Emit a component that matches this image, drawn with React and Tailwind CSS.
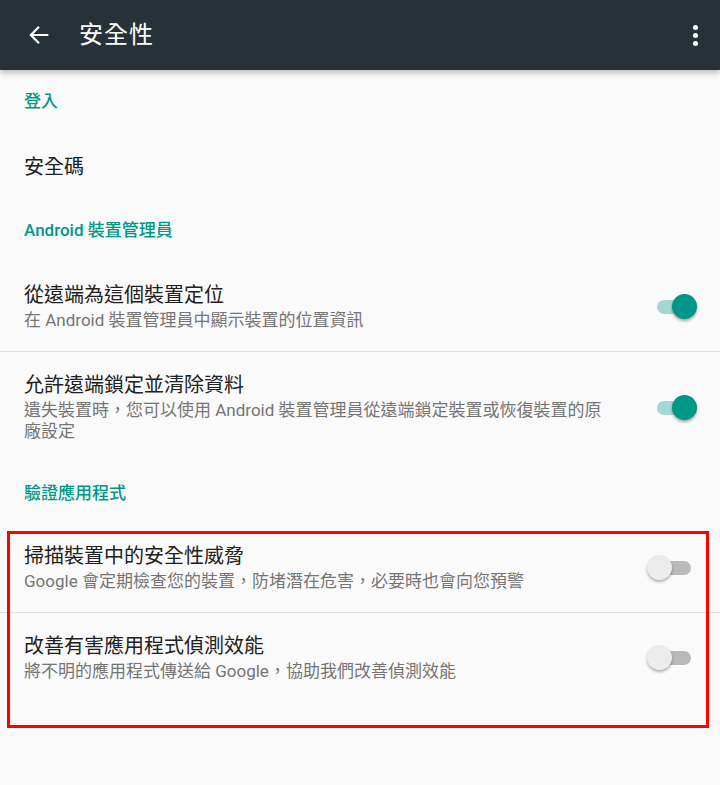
const font = { fontFamily: '"Roboto", "Noto Sans CJK TC", sans-serif' };

function Toggle({ on }) {
  return (
    <div className="relative h-[26px] w-[52px] shrink-0">
      <div
        className={
          on
            ? 'absolute left-[10px] top-[6px] h-[14px] w-[34px] rounded-full bg-[#a6d8d3]'
            : 'absolute left-[10px] top-[6px] h-[14px] w-[34px] rounded-full bg-[#b9b9b9]'
        }
      />
      <div
        className={
          on
            ? 'absolute left-[25px] top-0 h-[25px] w-[25px] rounded-full bg-[#009688] shadow-[0_2px_3px_rgba(0,0,0,0.35)]'
            : 'absolute left-0 top-0 h-[25px] w-[25px] rounded-full bg-[#ececec] shadow-[0_2px_3px_rgba(0,0,0,0.3)]'
        }
      />
    </div>
  );
}

function Category({ children }) {
  return (
    <div className="flex h-[64px] items-center px-6 text-[17px] font-medium text-[#009688]">
      {children}
    </div>
  );
}

function SwitchRow({ title, summary, on, divider, pt = 'pt-5' }) {
  return (
    <div className={divider ? 'border-b border-[#e0e0e0]' : ''}>
      <div className={`flex items-center gap-[40px] pb-5 pl-6 pr-[21px] ${pt}`}>
        <div className="flex-1">
          <div className="text-[20px] leading-[24px] text-[#212121]">{title}</div>
          <div className="mt-[3px] text-[17px] leading-[21px] text-[#757575]">{summary}</div>
        </div>
        <Toggle on={on} />
      </div>
    </div>
  );
}

export default function App() {
  return (
    <div className="relative min-h-[785px] w-[720px] overflow-hidden bg-[#fafafa]" style={font}>
      <header className="relative z-10 flex h-[70px] items-center bg-[#263238] pl-[25px] pr-[18px] shadow-[0_3px_6px_rgba(0,0,0,0.25)]">
        <svg width="28" height="28" viewBox="0 0 24 24" fill="none">
          <path d="M20 12H5M12 5l-7 7 7 7" stroke="#fff" strokeWidth="1.9" />
        </svg>
        <h1 className="ml-[26px] text-[24px] tracking-[1px] text-white">安全性</h1>
        <div className="ml-auto flex flex-col items-center gap-[3px] px-[4px]">
          <span className="h-[5px] w-[5px] rounded-full bg-white" />
          <span className="h-[5px] w-[5px] rounded-full bg-white" />
          <span className="h-[5px] w-[5px] rounded-full bg-white" />
        </div>
      </header>

      <Category>登入</Category>
      <div className="flex h-[65px] items-center px-6 text-[20px] text-[#212121]">安全碼</div>
      <Category>Android 裝置管理員</Category>

      <SwitchRow
        title="從遠端為這個裝置定位"
        summary="在 Android 裝置管理員中顯示裝置的位置資訊"
        on
        divider
      />
      <SwitchRow
        title="允許遠端鎖定並清除資料"
        summary="遺失裝置時，您可以使用 Android 裝置管理員從遠端鎖定裝置或恢復裝置的原廠設定"
        on
        pt="pt-[21px]"
      />

      <Category>驗證應用程式</Category>

      <SwitchRow
        title="掃描裝置中的安全性威脅"
        summary="Google 會定期檢查您的裝置，防堵潛在危害，必要時也會向您預警"
        divider
        pt="pt-[18px]"
      />
      <SwitchRow
        title="改善有害應用程式偵測效能"
        summary="將不明的應用程式傳送給 Google，協助我們改善偵測效能"
        pt="pt-[21px]"
      />

      <div className="pointer-events-none absolute left-[7px] top-[531px] h-[197px] w-[702px] border-[3px] border-[#ff0000]" />
    </div>
  );
}
